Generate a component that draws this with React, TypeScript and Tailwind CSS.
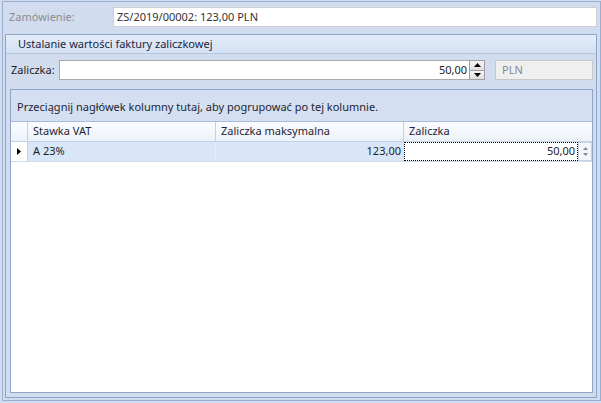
import React from 'react'

const font = { fontFamily: '"Noto Sans", "Open Sans", sans-serif' }

function Spinner() {
  return (
    <div className="flex flex-col w-[16px] h-[20px] border border-[#a0a0a0] bg-[#e8e8e8]">
      <div className="flex-1 flex items-center justify-center border-b border-[#a0a0a0] bg-gradient-to-b from-[#f4f4f4] to-[#dedede]">
        <svg width="7" height="4" viewBox="0 0 7 4"><path d="M0 4 L3.5 0 L7 4 Z" fill="#000" /></svg>
      </div>
      <div className="flex-1 flex items-center justify-center bg-gradient-to-b from-[#f4f4f4] to-[#dedede]">
        <svg width="7" height="4" viewBox="0 0 7 4"><path d="M0 0 L3.5 4 L7 0 Z" fill="#000" /></svg>
      </div>
    </div>
  )
}

export default function App() {
  return (
    <div className="w-[601px] h-[403px] bg-[#d1ddef] pl-[2px] pt-[1px] pb-[2px] text-[11px] text-[#1e1e1e]" style={font}>
      <div className="h-full border border-[#99afd1] flex flex-col">
        {/* Zamówienie */}
        <div className="flex items-center mt-[5px] mr-[3px] h-[20px]">
          <span className="w-[110px] pl-[6px] text-[#8c8c8c]">Zamówienie:</span>
          <div className="flex-1 h-full bg-white border border-[#cfcfcf] flex items-center pl-[3px] text-[#333]">
            ZS/2019/00002: 123,00 PLN
          </div>
        </div>

        {/* Group box */}
        <div className="flex-1 mt-[7px] ml-[2px] mr-[3px] mb-[2px] border border-[#8fa5c8] flex flex-col">
          <div className="h-[19px] border-b border-[#b3c6e2] bg-gradient-to-b from-[#e3ecf9] to-[#d3e1f4] flex items-center pl-[12px] text-[#1a2640] text-[11px]">
            Ustalanie wartości faktury zaliczkowej
          </div>

          <div className="flex items-center h-[20px] mt-[6px] pr-[3px]">
            <span className="w-[53px] pl-[5px]">Zaliczka:</span>
            <div className="w-[410px] h-full bg-white border border-[#aaaaaa] border-r-0 flex items-center justify-end pr-[2px]">
              50,00
            </div>
            <Spinner />
            <div className="ml-[10px] flex-1 h-full bg-[#efefef] border border-[#c8c8c8] flex items-center pl-[6px] text-[#7d8a99]">
              PLN
            </div>
          </div>

          {/* Grid */}
          <div className="flex-1 mt-[9px] ml-[4px] mr-[3px] mb-[4px] border border-[#8ea4c8] bg-white flex flex-col">
            <div className="h-[32px] bg-[#d4e0f1] border-b border-[#a9bcdb] flex items-center pl-[6px] pt-[3px] text-[#1e2533]">
              Przeciągnij nagłówek kolumny tutaj, aby pogrupować po tej kolumnie.
            </div>
            <div className="flex h-[20px] border-b border-[#c3d1e6] bg-gradient-to-b from-[#fafcfe] to-[#edf2f9] text-[#1e2533]">
              <div className="w-[17px] border-r border-[#c3d1e6]" />
              <div className="w-[188px] border-r border-[#c3d1e6] flex items-center pl-[5px]">Stawka VAT</div>
              <div className="w-[188px] border-r border-[#c3d1e6] flex items-center pl-[5px]">Zaliczka maksymalna</div>
              <div className="flex-1 flex items-center pl-[5px]">Zaliczka</div>
            </div>
            <div className="flex h-[20px] border-b border-[#d0dcee] bg-[#d9e6f8]">
              <div className="w-[17px] border-r border-[#c3d1e6] flex items-center justify-center bg-white">
                <svg width="4" height="7" viewBox="0 0 4 7"><path d="M0 0 L4 3.5 L0 7 Z" fill="#000" /></svg>
              </div>
              <div className="w-[188px] border-r border-[#e4ecf8] flex items-center pl-[5px]">A 23%</div>
              <div className="w-[188px] flex items-center justify-end pr-[3px]">123,00</div>
              <div className="flex-1 flex items-stretch">
                <div className="flex-1 bg-white border border-dotted border-black flex items-center justify-end pr-[2px]">50,00</div>
                <div className="w-[14px] flex flex-col items-center justify-center gap-[3px] border border-[#c8d3e3] bg-[#f3f6fa]">
                  <svg width="5" height="3" viewBox="0 0 5 3"><path d="M0 3 L2.5 0 L5 3 Z" fill="#888" /></svg>
                  <svg width="5" height="3" viewBox="0 0 5 3"><path d="M0 0 L2.5 3 L5 0 Z" fill="#888" /></svg>
                </div>
              </div>
            </div>
            <div className="flex-1" />
          </div>
        </div>
      </div>
    </div>
  )
}
